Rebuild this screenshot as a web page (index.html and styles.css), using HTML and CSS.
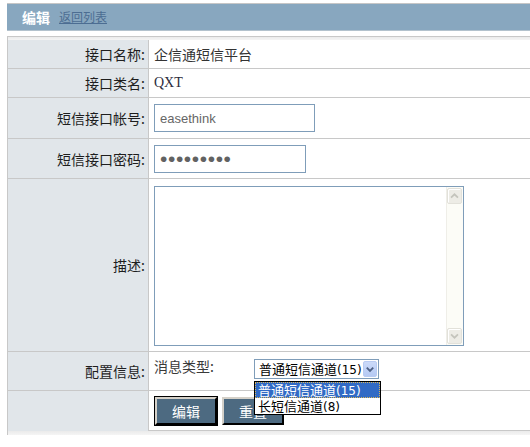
FILE: index.html
```html
<!DOCTYPE html>
<html lang="zh-CN">
<head>
<meta charset="utf-8">
<title>编辑</title>
<link rel="stylesheet" href="styles.css">
</head>
<body>
<div class="head">
  <span class="head-title">编辑</span>
  <a class="head-link" href="#">返回列表</a>
</div>
<div class="form">
  <div class="band"></div>
  <div class="grid">
    <div class="lbl">接口名称:</div>
    <div class="val">企信通短信平台</div>
    <div class="lbl">接口类名:</div>
    <div class="val serif">QXT</div>
    <div class="lbl">短信接口帐号:</div>
    <div class="val"><input class="field field-user" type="text" value="easethink"></div>
    <div class="lbl">短信接口密码:</div>
    <div class="val"><input class="field field-pass" type="password" value="123456789"></div>
    <div class="lbl">描述:</div>
    <div class="val val-memo">
      <div class="memo">
        <textarea class="memo-text"></textarea>
        <div class="scroll">
          <div class="scroll-btn"><svg width="15" height="14" viewBox="0 0 15 14"><path d="M3.5 9 L7.5 5 L11.5 9" fill="none" stroke="#c4c4bc" stroke-width="2"/></svg></div>
          <div class="scroll-track"></div>
          <div class="scroll-btn"><svg width="15" height="14" viewBox="0 0 15 14"><path d="M3.5 5 L7.5 9 L11.5 5" fill="none" stroke="#c4c4bc" stroke-width="2"/></svg></div>
        </div>
      </div>
    </div>
    <div class="lbl">配置信息:</div>
    <div class="val val-conf">
      <span class="sub-lbl">消息类型:</span>
      <div class="combo">
        <div class="combo-box">
          <span class="combo-text">普通短信通道<span class="num">(15)</span></span>
          <span class="combo-btn"><svg width="13" height="14" viewBox="0 0 13 14"><path d="M3 5.5 L6.5 9 L10 5.5" fill="none" stroke="#4d6185" stroke-width="2"/></svg></span>
        </div>
        <ul class="combo-list">
          <li class="combo-opt combo-opt-sel">普通短信通道<span class="num">(15)</span></li>
          <li class="combo-opt">长短信通道<span class="num">(8)</span></li>
        </ul>
      </div>
    </div>
    <div class="lbl lbl-last"></div>
    <div class="val val-btns"><button class="btn btn-focus" type="button">编辑</button><button class="btn" type="button">重置</button></div>
  </div>
  <div class="band band-bottom"></div>
</div>
</body>
</html>
```
FILE: styles.css
```css
* { box-sizing: border-box; }
html, body { margin: 0; padding: 0; background: #fff; }
body {
  font-family: "Noto Sans CJK SC", "Liberation Sans", sans-serif;
  font-size: 14px;
  color: #222;
  overflow: hidden;
}

.head {
  margin: 3px 0 0 7px;
  height: 28px;
  border-top: 1px solid #c6c6c6;
  border-bottom: 1px solid #b3c2cd;
  background: #88a7bf;
  display: flex;
  align-items: center;
  padding-left: 15px;
  gap: 9px;
}
.head-title { color: #fff; font-weight: bold; font-size: 14px; line-height: 16px; }
.head-link { color: #4c6d92; font-size: 12px; line-height: 14px; text-decoration: underline; }

.form {
  margin: 5px 0 0 7px;
  border-top: 1px solid #c8c8c8;
  border-left: 1px solid #c8c8c8;
}
.band { height: 3px; background: linear-gradient(#ebebeb, #f5f5f5); }
.band-bottom { height: 4px; }

.grid {
  display: grid;
  grid-template-columns: 141px 1fr;
  grid-template-rows: 29px 29px 41px 40px 173px 39px 40px;
}
.lbl {
  background: #e1e6ea;
  border-right: 1px solid #c8c8c8;
  border-bottom: 1px solid #c8c8c8;
  display: flex;
  align-items: center;
  justify-content: flex-end;
  padding-right: 3px;
  color: #1e1e1e;
  line-height: 16px;
}
.lbl-last { border-bottom: none; }
.val {
  border-bottom: 1px solid #c8c8c8;
  padding-left: 5px;
  display: flex;
  align-items: center;
  color: #333;
  line-height: 16px;
}
.serif { font-family: "Liberation Serif", serif; font-size: 14px; color: #2c2c3c; }

.field {
  height: 28px;
  border: 1px solid #7f9db9;
  padding: 0 5px;
  font-family: "Liberation Sans", sans-serif;
  font-size: 13px;
  color: #666;
  background: #fff;
  outline: none;
}
.field-user { width: 161px; }
.field-pass { width: 152px; font-size: 21px; letter-spacing: 0.6px; color: #626262; padding-left: 5px; }

.val-memo { align-items: flex-start; padding-top: 7px; }
.memo {
  width: 310px;
  height: 160px;
  border: 1px solid #7f9db9;
  display: flex;
  background: #fff;
}
.memo-text {
  flex: 1;
  border: none;
  resize: none;
  outline: none;
  margin: 0;
  padding: 2px;
  background: #fff;
}
.scroll {
  width: 17px;
  background: #fcfcf7;
  border-left: 1px solid #efeee8;
  display: flex;
  flex-direction: column;
  padding: 1px 1px 1px 0;
}
.scroll-btn {
  height: 16px;
  background: #edece6;
  border: 1px solid #e2e1da;
  border-radius: 2px;
  box-shadow: inset 1px 1px 0 #fff;
  display: flex;
  align-items: center;
  justify-content: center;
}
.scroll-track { flex: 1; }

.val-conf { align-items: flex-start; padding-top: 6px; }
.sub-lbl { width: 100px; color: #3a3a3a; line-height: 16px; }
.combo { position: relative; margin-top: 1px; }
.combo-box {
  width: 125px;
  height: 20px;
  border: 1px solid #7f9db9;
  background: #fff;
  display: flex;
  align-items: center;
  justify-content: space-between;
  padding: 0 1px 0 4px;
}
.combo-text { font-size: 13px; color: #000; line-height: 16px; }
.num { font-family: "DejaVu Sans", "Liberation Sans", sans-serif; font-size: 12px; }
.combo-btn {
  width: 14px;
  height: 16px;
  background: linear-gradient(#cbdaf9, #b5c9f3);
  border: 1px solid #b8cbf2;
  border-radius: 2px;
  display: flex;
  align-items: center;
  justify-content: center;
}
.combo-list {
  position: absolute;
  left: 0;
  top: 22px;
  width: 127px;
  margin: 0;
  padding: 0;
  list-style: none;
  border: 1px solid #000;
  background: #fff;
  z-index: 2;
}
.combo-opt {
  height: 16px;
  line-height: 14px;
  font-size: 13px;
  color: #000;
  padding-left: 2px;
  border: 1px solid transparent;
}
.combo-opt-sel { background: #316ac5; color: #fff; border: 1px dotted #d9b45a; }

.val-btns { gap: 5px; padding-left: 6px; }
.btn {
  width: 62px;
  height: 28px;
  padding: 0;
  background: #4d6a81;
  color: #fff;
  font-family: "Noto Sans CJK SC", sans-serif;
  font-size: 14px;
  border: 2px solid;
  border-color: #d4d0c8 #000 #000 #d4d0c8;
}
.btn-focus { outline: 1px solid #000; }
```
